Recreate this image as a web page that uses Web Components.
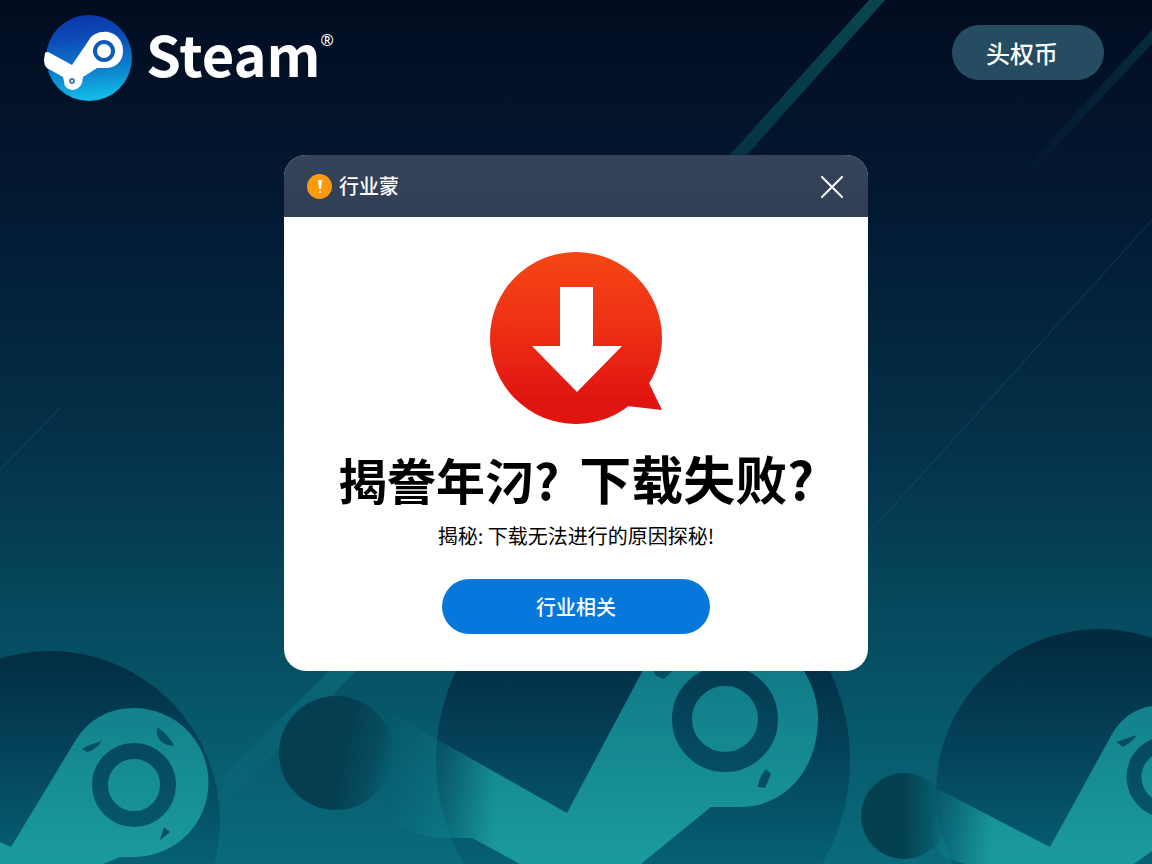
<!DOCTYPE html>
<html lang="zh-CN">
<head>
<meta charset="utf-8">
<meta name="viewport" content="width=device-width, initial-scale=1">
<title>Steam</title>
<style>
  html, body { margin: 0; min-height: 100%; }
  body { font-family: "Noto Sans CJK SC", "Noto Sans", sans-serif; color: #fff; background: #020d22; }
</style>
</head>
<body>
<steam-page>
  <site-header slot="header">
    <brand-mark slot="brand">Steam</brand-mark>
    <pill-button slot="action" kind="nav">头权币</pill-button>
  </site-header>
  <notice-dialog>
    <span slot="title">行业蒙</span>
    <download-badge slot="badge"></download-badge>
    <span slot="question">揭誊年汈?</span>
    <span slot="problem">下载失败?</span>
    <span slot="summary">揭秘: 下载无法进行的原因探秘!</span>
    <pill-button slot="action" kind="primary">行业相关</pill-button>
  </notice-dialog>
</steam-page>

<script>
const define = (name, html) => customElements.define(name, class extends HTMLElement {
  constructor() {
    super();
    const t = document.createElement('template');
    t.innerHTML = html;
    this.attachShadow({ mode: 'open' }).append(t.content.cloneNode(true));
  }
});

define('page-backdrop', `
<style>
  :host { display: block; position: absolute; inset: 0; overflow: hidden; }
  svg { display: block; width: 100%; height: 100%; }
</style>
<svg viewBox="0 0 1152 864" preserveAspectRatio="xMidYMid slice" aria-hidden="true">
  <defs>
    <linearGradient id="sky" x1="0" y1="0" x2="0" y2="1">
      <stop offset="0" stop-color="#020c20"/><stop offset=".25" stop-color="#031a33"/>
      <stop offset=".5" stop-color="#043048"/><stop offset=".76" stop-color="#064f63"/>
      <stop offset="1" stop-color="#096b7b"/>
    </linearGradient>
    <linearGradient id="disc" gradientUnits="userSpaceOnUse" x1="0" y1="640" x2="0" y2="864">
      <stop offset="0" stop-color="#022a40"/><stop offset=".5" stop-color="#04435a"/><stop offset="1" stop-color="#066073"/>
    </linearGradient>
    <linearGradient id="ring" gradientUnits="userSpaceOnUse" x1="0" y1="660" x2="0" y2="840">
      <stop offset="0" stop-color="#033a50"/><stop offset="1" stop-color="#06596d"/>
    </linearGradient>
    <linearGradient id="arm" gradientUnits="userSpaceOnUse" x1="0" y1="670" x2="0" y2="864">
      <stop offset="0" stop-color="#107b87"/><stop offset="1" stop-color="#1b9b9d"/>
    </linearGradient>
    <linearGradient id="fadeA" gradientUnits="userSpaceOnUse" x1="385" y1="0" x2="495" y2="0">
      <stop offset="0" stop-color="#fff" stop-opacity="0"/><stop offset=".55" stop-color="#fff" stop-opacity=".3"/><stop offset="1" stop-color="#fff"/>
    </linearGradient>
    <linearGradient id="fadeB" gradientUnits="userSpaceOnUse" x1="930" y1="0" x2="992" y2="0">
      <stop offset="0" stop-color="#fff" stop-opacity="0"/><stop offset="1" stop-color="#fff"/>
    </linearGradient>
    <mask id="maskA" maskUnits="userSpaceOnUse" x="0" y="0" width="1152" height="864"><rect width="1152" height="864" fill="url(#fadeA)"/></mask>
    <mask id="maskB" maskUnits="userSpaceOnUse" x="0" y="0" width="1152" height="864"><rect width="1152" height="864" fill="url(#fadeB)"/></mask>
    <linearGradient id="ballA" gradientUnits="userSpaceOnUse" x1="345" y1="740" x2="400" y2="752">
      <stop offset="0" stop-color="#043e50"/><stop offset=".6" stop-color="#054658" stop-opacity=".7"/><stop offset="1" stop-color="#06556a" stop-opacity="0"/>
    </linearGradient>
    <linearGradient id="ballB" gradientUnits="userSpaceOnUse" x1="905" y1="0" x2="955" y2="0">
      <stop offset="0" stop-color="#04414f"/><stop offset="1" stop-color="#066070" stop-opacity=".3"/>
    </linearGradient>
    <linearGradient id="ray" x1="0" y1="0" x2="0" y2="1">
      <stop offset="0" stop-color="#08464f"/><stop offset="1" stop-color="#063444"/>
    </linearGradient>
    <linearGradient id="rayFade" x1="1" y1="0" x2="0" y2="1">
      <stop offset="0" stop-color="#0a4a58" stop-opacity=".5"/><stop offset="1" stop-color="#0a4a58" stop-opacity="0"/>
    </linearGradient>
    <linearGradient id="rayLow" x1="1" y1="0" x2="0" y2="1">
      <stop offset="0" stop-color="#0d7480" stop-opacity=".6"/><stop offset="1" stop-color="#0d7480" stop-opacity=".1"/>
    </linearGradient>
  </defs>
  <rect width="1152" height="864" fill="url(#sky)"/>
  <path d="M869 0H885L746 156H729Z" fill="url(#ray)"/>
  <path d="M1152 30V44L1030 174H1020Z" fill="url(#rayFade)"/>
  <path d="M1152 220L868 534M0 470L60 408" stroke="#1a6273" stroke-opacity=".5" fill="none"/>
  <path d="M330 670H357L222 806V776Z" fill="url(#rayLow)"/>

  <circle cx="50" cy="821" r="170" fill="url(#disc)"/>
  <path d="M0 842L11 847L77 738C90 719 109 708 134 708A74.5 74.5 0 0 1 134 857H120L103 864H0Z" fill="url(#arm)"/>
  <circle cx="134" cy="785" r="34" fill="none" stroke="url(#ring)" stroke-width="16"/>
  <path d="M82 749Q90 744 102 741Q96 750 87 752ZM157 727Q170 736 174 746Q160 745 157 735ZM164 827L170 832L160 840Z" fill="#044e62"/>

  <circle cx="643" cy="760" r="207" fill="url(#disc)"/>
  <circle cx="336" cy="753" r="57" fill="url(#ballA)"/>
  <path mask="url(#maskA)" d="M380 705L440 741L567 813L643 670L660 630H729A89 89 0 0 1 818 718C818 770 785 807 740 807H711L641 864H520L472 838H456Q400 840 370 800Z" fill="url(#arm)"/>
  <circle cx="725" cy="719" r="43" fill="none" stroke="url(#ring)" stroke-width="20"/>
  <path d="M652 668H675L664 679L656 676ZM766 769L771 774L765 788L758 787Q759 777 766 769Z" fill="#044e62"/>

  <circle cx="1099" cy="792" r="163" fill="url(#disc)"/>
  <circle cx="904" cy="816" r="43" fill="url(#ballB)"/>
  <path mask="url(#maskB)" d="M936 788L1050 847L1112 734Q1126 710 1152 706V851L1134 864H965L945 857L930 840Z" fill="url(#arm)"/>
  <circle cx="1167" cy="777" r="33" fill="none" stroke="url(#ring)" stroke-width="15"/>
  <path d="M1116 742L1137 735Q1132 742 1123 747Z" fill="#044e62"/>
</svg>`);

define('steam-page', `
<style>
  :host { display: block; position: relative; min-height: 100vh; }
  .layout { position: relative; display: flex; flex-direction: column; gap: 40px; padding-bottom: 40px; }
  main { display: flex; justify-content: center; padding: 0 16px; }
</style>
<page-backdrop></page-backdrop>
<div class="layout">
  <slot name="header"></slot>
  <main><slot></slot></main>
</div>`);

define('site-header', `
<style>
  :host { display: block; }
  header { display: flex; justify-content: space-between; align-items: flex-start; padding: 15px 48px 14px 44px; }
  .action { padding-top: 10px; }
</style>
<header>
  <slot name="brand"></slot>
  <div class="action"><slot name="action"></slot></div>
</header>`);

define('brand-mark', `
<style>
  :host { display: block; }
  a { display: flex; align-items: flex-start; color: #fff; text-decoration: none; }
  svg { display: block; width: 88px; height: 86px; margin-right: 14px; }
  .name { font-size: 56px; line-height: 76px; font-weight: 700; }
  .mark { font: 16px/20px "Noto Sans", sans-serif; margin-top: 15px; }
</style>
<a href="#">
  <svg viewBox="0 0 88 86" aria-hidden="true">
    <defs><linearGradient id="g" x1="0" y1="0" x2=".1" y2="1">
      <stop offset="0" stop-color="#0a35a8"/><stop offset=".3" stop-color="#0c4ab8"/><stop offset=".7" stop-color="#0d83cd"/><stop offset="1" stop-color="#12b9e6"/>
    </linearGradient></defs>
    <circle cx="45" cy="43" r="43" fill="url(#g)"/>
    <path d="M1 38Q3 36 6 38L28 50L45 25C48 19 56 16 64 17C74 19 79 27 79 36C79 46 72 53 62 53L53 53L39 62L38 68Q35 75 28 75Q20 74 20 66L19 62L3 53Q0 50 0 45Z" fill="#fff"/>
    <circle cx="60" cy="36" r="9" fill="#fff" stroke="#0c5cb8" stroke-width="4"/>
    <circle cx="28" cy="66" r="2" fill="#fff" stroke="#4c7ca8" stroke-width="2"/>
  </svg>
  <span class="name"><slot></slot></span>
  <span class="mark">®</span>
</a>`);

define('pill-button', `
<style>
  :host { display: block; }
  button { display: block; box-sizing: border-box; border: 0; margin: 0; padding: 0; height: 55px; border-radius: 28px; color: #fff; font: inherit; cursor: pointer; }
  :host([kind="nav"]) button { width: 152px; font-size: 24px; font-weight: 500; background: #264c61; padding-right: 12px; }
  :host([kind="primary"]) button { width: 268px; max-width: 100%; font-size: 20px; font-weight: 500; background: #0678db; }
</style>
<button type="button"><slot></slot></button>`);

define('download-badge', `
<style>
  :host { display: block; }
  svg { display: block; width: 172px; height: 172px; }
</style>
<svg viewBox="0 0 172 172" role="img" aria-label="下载">
  <defs><linearGradient id="r" gradientUnits="userSpaceOnUse" x1="0" y1="0" x2="0" y2="172">
    <stop offset="0" stop-color="#f64615"/><stop offset=".4" stop-color="#ee3214"/><stop offset=".85" stop-color="#e11510"/><stop offset="1" stop-color="#e0150f"/>
  </linearGradient></defs>
  <circle cx="86" cy="86" r="86" fill="url(#r)"/>
  <path d="M163 120L159 131L172 158L137 154L120 158V120Z" fill="url(#r)"/>
  <path d="M70 35H103V94H132L87 140L42 94H70Z" fill="#fff"/>
</svg>`);

define('notice-dialog', `
<style>
  :host { display: block; width: 584px; max-width: 100%; }
  section { border-radius: 22px; overflow: hidden; background: #fff; color: #000; }
  header { display: flex; align-items: center; height: 62px; padding: 0 20px 0 23px; gap: 7px; background: linear-gradient(#35445b, #303f56); color: #fff; }
  .warn { width: 25px; height: 25px; }
  h2 { flex: 1; margin: 0; font-size: 20px; line-height: 30px; font-weight: 500; }
  .close { display: block; width: 32px; height: 32px; padding: 4px; border: 0; background: none; cursor: pointer; }
  svg { display: block; }
  .body { display: flex; flex-direction: column; align-items: center; padding: 35px 24px 37px; }
  h1 { display: flex; flex-wrap: wrap; justify-content: center; align-items: baseline; gap: 0 20px; margin: 18px 0 6px; font-weight: 700; line-height: 72px; }
  .first { font-size: 49px; }
  .second { font-size: 52px; }
  p { margin: 0 0 28px; font-size: 20px; line-height: 30px; }
</style>
<section role="dialog" aria-labelledby="title">
  <header>
    <svg class="warn" viewBox="0 0 25 25" aria-hidden="true">
      <circle cx="12.5" cy="12.5" r="12.5" fill="#fb9a0c"/>
      <path d="M11 6H15L14 15H12Z" fill="#fff"/><circle cx="13" cy="18" r="1" fill="#fff"/>
    </svg>
    <h2 id="title"><slot name="title"></slot></h2>
    <button class="close" type="button" aria-label="关闭">
      <svg width="24" height="24" viewBox="0 0 24 24" fill="none" stroke="#fff" stroke-width="2" stroke-linecap="round"><path d="M2 3L22 23M22 3L2 23"/></svg>
    </button>
  </header>
  <div class="body">
    <slot name="badge"></slot>
    <h1><span class="first"><slot name="question"></slot></span><span class="second"><slot name="problem"></slot></span></h1>
    <p><slot name="summary"></slot></p>
    <slot name="action"></slot>
  </div>
</section>`);
</script>
</body>
</html>
